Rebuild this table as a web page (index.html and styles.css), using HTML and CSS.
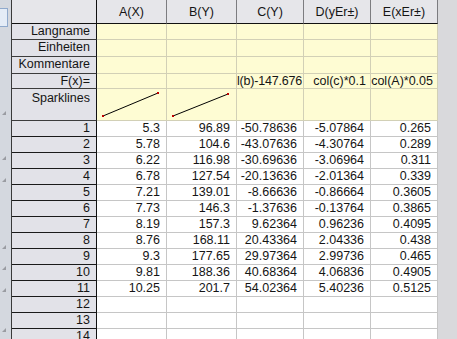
FILE: index.html
```html
<!DOCTYPE html>
<html lang="de">
<head>
    <meta charset="UTF-8">
    <title>Worksheet</title>
    <link rel="stylesheet" href="styles.css">
</head>
<body>
    <div class="window">
        <div class="side-strip">
            <div class="side-tab"></div>
            <div class="mark" style="margin-top: 84px"></div>
            <div class="mark" style="margin-top: 41px"></div>
            <div class="mark" style="margin-top: 18px"></div>
            <div class="mark" style="margin-top: 63px"></div>
            <div class="mark" style="margin-top: 17px"></div>
            <div class="mark" style="margin-top: 18px"></div>
            <div class="mark" style="margin-top: 36px"></div>
        </div>

        <div class="sheet">
            <!-- column headers -->
            <div class="corner"></div>
            <div class="col-head">A(X)</div>
            <div class="col-head">B(Y)</div>
            <div class="col-head">C(Y)</div>
            <div class="col-head">D(yEr±)</div>
            <div class="col-head">E(xEr±)</div>

            <!-- label rows -->
            <div class="row-head label">Langname</div>
            <div class="meta"></div><div class="meta"></div><div class="meta"></div><div class="meta"></div><div class="meta"></div>

            <div class="row-head label">Einheiten</div>
            <div class="meta"></div><div class="meta"></div><div class="meta"></div><div class="meta"></div><div class="meta"></div>

            <div class="row-head label">Kommentare</div>
            <div class="meta"></div><div class="meta"></div><div class="meta"></div><div class="meta"></div><div class="meta"></div>

            <div class="row-head label">F(x)=</div>
            <div class="meta"></div>
            <div class="meta"></div>
            <div class="meta formula clipped">l(b)-147.676</div>
            <div class="meta formula">col(c)*0.1</div>
            <div class="meta formula">col(A)*0.05</div>

            <div class="row-head label top">Sparklines</div>
            <div class="meta">
                <svg class="spark" width="69" height="31" viewBox="0 0 69 31">
                    <line x1="6" y1="27" x2="61" y2="4" stroke="#000" stroke-width="1"/>
                    <rect x="5" y="26" width="2" height="2" fill="#c00000"/>
                    <rect x="60" y="3" width="2" height="2" fill="#c00000"/>
                </svg>
            </div>
            <div class="meta">
                <svg class="spark" width="69" height="31" viewBox="0 0 69 31">
                    <line x1="6" y1="27" x2="61" y2="5" stroke="#000" stroke-width="1"/>
                    <rect x="5" y="26" width="2" height="2" fill="#c00000"/>
                    <rect x="60" y="4" width="2" height="2" fill="#c00000"/>
                </svg>
            </div>
            <div class="meta"></div><div class="meta"></div><div class="meta"></div>

            <!-- data rows -->
            <div class="row-head">1</div><div class="cell">5.3</div><div class="cell">96.89</div><div class="cell">-50.78636</div><div class="cell">-5.07864</div><div class="cell">0.265</div>
            <div class="row-head">2</div><div class="cell">5.78</div><div class="cell">104.6</div><div class="cell">-43.07636</div><div class="cell">-4.30764</div><div class="cell">0.289</div>
            <div class="row-head">3</div><div class="cell">6.22</div><div class="cell">116.98</div><div class="cell">-30.69636</div><div class="cell">-3.06964</div><div class="cell">0.311</div>
            <div class="row-head">4</div><div class="cell">6.78</div><div class="cell">127.54</div><div class="cell">-20.13636</div><div class="cell">-2.01364</div><div class="cell">0.339</div>
            <div class="row-head">5</div><div class="cell">7.21</div><div class="cell">139.01</div><div class="cell">-8.66636</div><div class="cell">-0.86664</div><div class="cell">0.3605</div>
            <div class="row-head">6</div><div class="cell">7.73</div><div class="cell">146.3</div><div class="cell">-1.37636</div><div class="cell">-0.13764</div><div class="cell">0.3865</div>
            <div class="row-head">7</div><div class="cell">8.19</div><div class="cell">157.3</div><div class="cell">9.62364</div><div class="cell">0.96236</div><div class="cell">0.4095</div>
            <div class="row-head">8</div><div class="cell">8.76</div><div class="cell">168.11</div><div class="cell">20.43364</div><div class="cell">2.04336</div><div class="cell">0.438</div>
            <div class="row-head">9</div><div class="cell">9.3</div><div class="cell">177.65</div><div class="cell">29.97364</div><div class="cell">2.99736</div><div class="cell">0.465</div>
            <div class="row-head">10</div><div class="cell">9.81</div><div class="cell">188.36</div><div class="cell">40.68364</div><div class="cell">4.06836</div><div class="cell">0.4905</div>
            <div class="row-head">11</div><div class="cell">10.25</div><div class="cell">201.7</div><div class="cell">54.02364</div><div class="cell">5.40236</div><div class="cell">0.5125</div>
            <div class="row-head">12</div><div class="cell"></div><div class="cell"></div><div class="cell"></div><div class="cell"></div><div class="cell"></div>
            <div class="row-head">13</div><div class="cell"></div><div class="cell"></div><div class="cell"></div><div class="cell"></div><div class="cell"></div>
            <div class="row-head">14</div><div class="cell"></div><div class="cell"></div><div class="cell"></div><div class="cell"></div><div class="cell"></div>
        </div>

        <div class="right-fill"></div>
    </div>
</body>
</html>
```

FILE: styles.css
```css
html, body {
    margin: 0;
    padding: 0;
    overflow: hidden;
}

body {
    font-family: 'Liberation Sans', Arial, sans-serif;
    font-size: 12.5px;
    color: #151515;
    background: #d9d9dc;
}

.window {
    display: flex;
    height: 339px;
    overflow: hidden;
}

/* left docking strip */
.side-strip {
    width: 11px;
    flex-shrink: 0;
    background: #d4d8df;
    border-right: 1px solid #3a3a3a;
    display: flex;
    flex-direction: column;
    align-items: flex-start;
}

.side-tab {
    margin-top: 8px;
    width: 8px;
    height: 19px;
    background: #e4ecf7;
    border: 1px solid #8fa9cc;
    border-left: none;
    box-sizing: border-box;
}

.mark {
    margin-left: 2px;
    width: 0;
    height: 0;
    border-left: 4px solid transparent;
    border-bottom: 4px solid #9a9ca2;
}

/* worksheet grid */
.sheet {
    display: grid;
    grid-template-columns: 85px 70px 70px 67px 67px 67px;
    grid-template-rows: 24px 16px 17px 17px 15px 32px repeat(14, 16px);
    flex-shrink: 0;
    align-self: flex-start;
}

.sheet > div {
    box-sizing: border-box;
    border-right: 1px solid #c6c6c6;
    border-bottom: 1px solid #c6c6c6;
    line-height: 15px;
    white-space: nowrap;
    overflow: hidden;
}

.corner,
.col-head {
    background: #e6e6ea;
    border-bottom-color: #111 !important;
    border-right-color: #7c7c80 !important;
}

.col-head {
    display: flex;
    align-items: center;
    justify-content: center;
    padding-top: 1px;
}

.corner {
    border-right-color: #111 !important;
}

.row-head {
    background: #e2e2e8;
    border-right-color: #111 !important;
    border-bottom-color: #1a1a1a !important;
    text-align: right;
    padding-right: 6px;
}

.row-head.label {
    border-bottom-color: #3c3c3c !important;
}

.row-head.top {
    padding-top: 2px;
}

.meta {
    background: #fefcd3;
    border-right-color: #d2d0b6 !important;
    border-bottom-color: #d2d0b6 !important;
}

.formula {
    text-align: right;
    padding-right: 4px;
}

.formula.clipped {
    text-align: left;
    padding: 0;
    letter-spacing: -0.2px;
}

.spark {
    display: block;
}

.cell {
    background: #fff;
    text-align: right;
    padding-right: 6px;
}

.right-fill {
    flex: 1;
    background: #d9d9dc;
}
```
